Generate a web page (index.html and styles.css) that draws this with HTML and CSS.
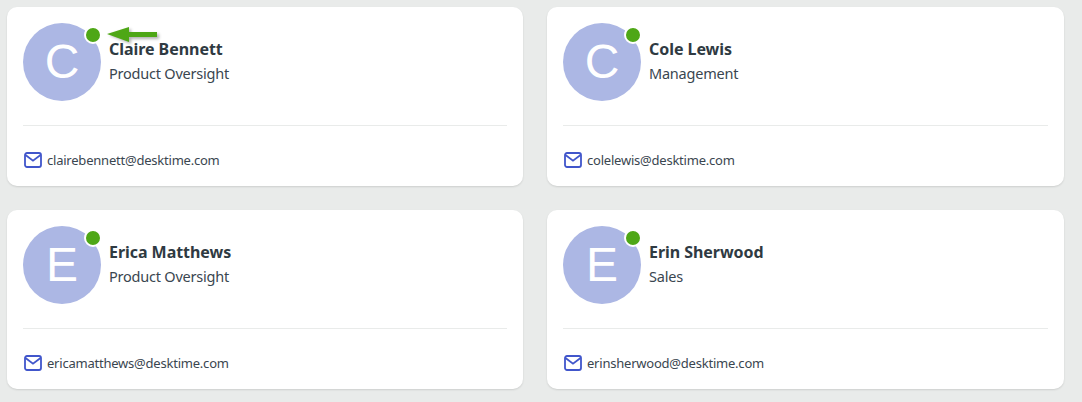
FILE: index.html
```html
<!DOCTYPE html>
<html lang="en">
<head>
    <meta charset="UTF-8">
    <meta name="viewport" content="width=device-width, initial-scale=1.0">
    <title>Colleagues</title>
    <link rel="stylesheet" href="styles.css">
</head>
<body>
    <div class="grid">
        <div class="card">
            <div class="person">
                <div class="avatar">C<span class="status"></span></div>
                <div class="info">
                    <div class="name">Claire Bennett</div>
                    <div class="role">Product Oversight</div>
                </div>
            </div>
            <div class="contact">
                <svg class="mail" viewBox="0 0 18 16"><rect x="1" y="1" width="16" height="14" rx="2"/><path d="M1.5 3l7.5 5.6L16.5 3"/></svg>
                <span>clairebennett@desktime.com</span>
            </div>
            <!-- annotation arrow -->
            <svg class="arrow" viewBox="0 0 54 18"><path class="arrow-shadow" d="M2 8L24 2v5h28v5H24v5z"/><path class="arrow-fill" d="M0 7L22 0v5h28v5H22v5z"/></svg>
        </div>

        <div class="card">
            <div class="person">
                <div class="avatar">C<span class="status"></span></div>
                <div class="info">
                    <div class="name">Cole Lewis</div>
                    <div class="role">Management</div>
                </div>
            </div>
            <div class="contact">
                <svg class="mail" viewBox="0 0 18 16"><rect x="1" y="1" width="16" height="14" rx="2"/><path d="M1.5 3l7.5 5.6L16.5 3"/></svg>
                <span>colelewis@desktime.com</span>
            </div>
        </div>

        <div class="card">
            <div class="person">
                <div class="avatar">E<span class="status"></span></div>
                <div class="info">
                    <div class="name">Erica Matthews</div>
                    <div class="role">Product Oversight</div>
                </div>
            </div>
            <div class="contact">
                <svg class="mail" viewBox="0 0 18 16"><rect x="1" y="1" width="16" height="14" rx="2"/><path d="M1.5 3l7.5 5.6L16.5 3"/></svg>
                <span>ericamatthews@desktime.com</span>
            </div>
        </div>

        <div class="card">
            <div class="person">
                <div class="avatar">E<span class="status"></span></div>
                <div class="info">
                    <div class="name">Erin Sherwood</div>
                    <div class="role">Sales</div>
                </div>
            </div>
            <div class="contact">
                <svg class="mail" viewBox="0 0 18 16"><rect x="1" y="1" width="16" height="14" rx="2"/><path d="M1.5 3l7.5 5.6L16.5 3"/></svg>
                <span>erinsherwood@desktime.com</span>
            </div>
        </div>
    </div>
</body>
</html>
```

FILE: styles.css
```css
* { margin: 0; padding: 0; box-sizing: border-box; }
body {
    font-family: "Noto Sans", sans-serif;
    background: #e9ebea;
    color: #3a4650;
    height: 402px;
    overflow: hidden;
}
.grid {
    display: grid;
    grid-template-columns: 516px 517px;
    gap: 24px;
    padding: 7px 18px 0 7px;
}
.card {
    background: white;
    border-radius: 10px;
    padding: 16px 16px 0;
    height: 179px;
    position: relative;
    box-shadow: 0 1px 2px rgba(0,0,0,0.12);
}
.person {
    display: flex;
    align-items: center;
    gap: 8px;
    padding-bottom: 24px;
    border-bottom: 1px solid #e9ebea;
}
.avatar {
    width: 78px;
    height: 78px;
    flex-shrink: 0;
    border-radius: 50%;
    background: #acb7e4;
    color: white;
    font-family: "Liberation Sans", sans-serif;
    font-size: 48px;
    line-height: 78px;
    text-align: center;
    position: relative;
}
.status {
    position: absolute;
    top: 3px;
    right: -1px;
    width: 18px;
    height: 18px;
    border-radius: 50%;
    background: #4ea716;
    border: 2px solid white;
}
.info { padding-bottom: 2px; }
.name { font-size: 16px; font-weight: 700; line-height: 24px; color: #2f3a42; letter-spacing: -0.05px; }
.role { font-size: 14.5px; line-height: 24px; letter-spacing: -0.22px; }
.contact {
    display: flex;
    align-items: center;
    gap: 5px;
    margin-top: 24px;
    font-size: 13px;
    line-height: 20px;
    letter-spacing: -0.22px;
}
.mail { width: 18px; height: 16px; margin-left: 1px; fill: none; stroke: #4156cb; stroke-width: 1.8; }
.arrow { position: absolute; left: 100px; top: 20px; width: 54px; height: 18px; overflow: visible; }
.arrow-fill { fill: #4ea716; }
.arrow-shadow { fill: rgba(0,0,0,0.3); filter: blur(1.5px); }
```
